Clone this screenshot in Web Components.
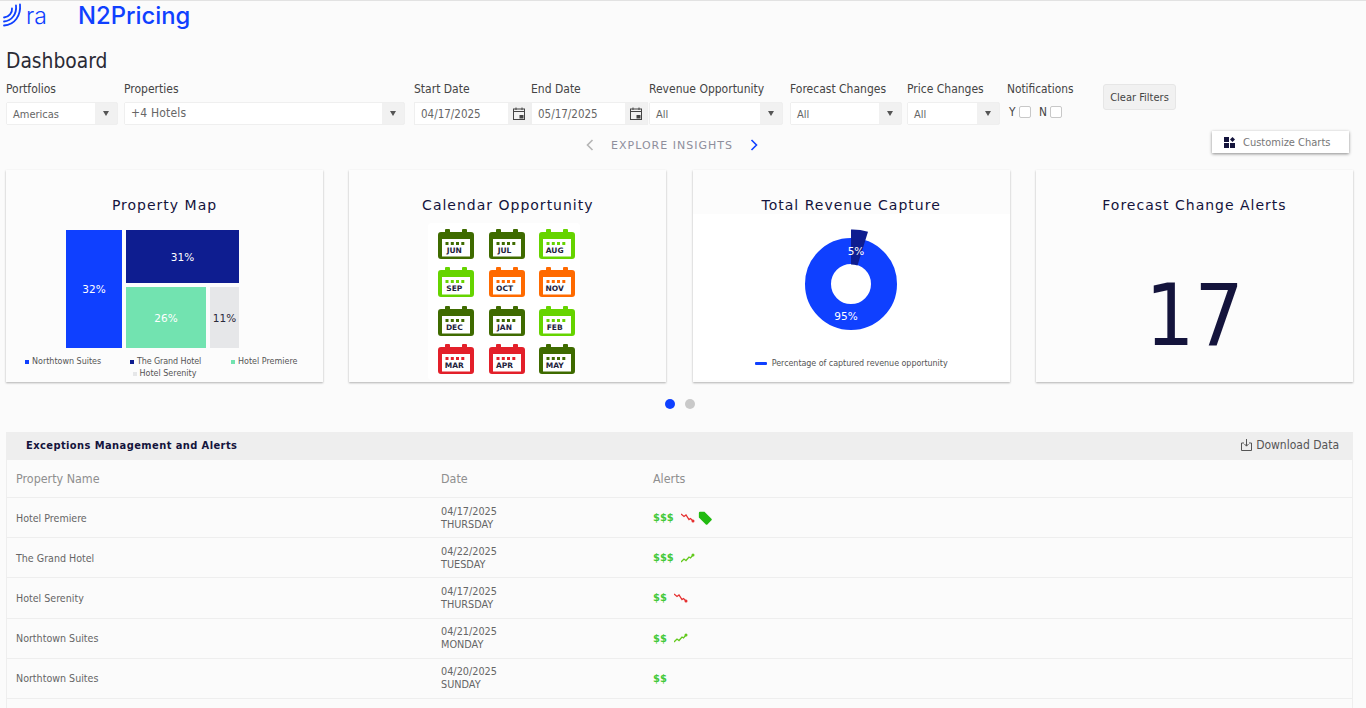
<!DOCTYPE html>
<html>
<head>
<meta charset="utf-8">
<title>N2Pricing Dashboard</title>
<style>
  html, body { margin: 0; height: 708px; overflow: hidden; background: #fbfbfb; }
  body { font-family: "DejaVu Sans Condensed", "DejaVu Sans", sans-serif; color: #444; border-top: 1px solid #e2e2e2; box-sizing: border-box; }
</style>
</head>
<body>
<app-header></app-header>
<filter-bar></filter-bar>
<insights-nav></insights-nav>
<card-row>
  <chart-card heading="Property Map"><property-treemap></property-treemap></chart-card>
  <chart-card heading="Calendar Opportunity"><calendar-grid></calendar-grid></chart-card>
  <chart-card heading="Total Revenue Capture"><revenue-donut></revenue-donut></chart-card>
  <chart-card heading="Forecast Change Alerts"><big-number value="17"></big-number></chart-card>
</card-row>
<carousel-dots></carousel-dots>
<exceptions-table>
  <alert-row name="Hotel Premiere" date="04/17/2025" day="THURSDAY" money="$$$" trend="down" tag></alert-row>
  <alert-row name="The Grand Hotel" date="04/22/2025" day="TUESDAY" money="$$$" trend="up"></alert-row>
  <alert-row name="Hotel Serenity" date="04/17/2025" day="THURSDAY" money="$$" trend="down"></alert-row>
  <alert-row name="Northtown Suites" date="04/21/2025" day="MONDAY" money="$$" trend="up"></alert-row>
  <alert-row name="Northtown Suites" date="04/20/2025" day="SUNDAY" money="$$"></alert-row>
</exceptions-table>

<script>
const FONT = '"DejaVu Sans Condensed", "DejaVu Sans", sans-serif';
const WIDE = '"DejaVu Sans", sans-serif';

function shadow(el, html) {
    el.attachShadow({ mode: 'open' }).innerHTML = html;
}

class AppHeader extends HTMLElement {
    connectedCallback() {
        shadow(this, `
        <style>
            :host { display: block; height: 41px; }
            .top { display: flex; align-items: baseline; color: #0f40ff; position: relative; padding-left: 26px; height: 30px; }
            svg { position: absolute; left: 0; top: 0; display: block; }
            .ra { font: 300 23px/30px Inter, sans-serif; width: 52px; flex: none; }
            .name { font: 500 23.800px/30px Inter, sans-serif; }
        </style>
        <div class="top">
            <svg width="24" height="28" viewBox="0 0 24 28" fill="none" stroke="#0f40ff" stroke-width="1.800" stroke-linecap="round">
                <path d="M20 3.500 C21 14 15 24 4 24.500"/>
                <path d="M16 4.500 C17 13 11.500 20 4 20.500"/>
                <path d="M12 7.500 C12.500 11.500 9 16 4 16.500"/>
            </svg>
            <span class="ra">ra</span>
            <span class="name">N2Pricing</span>
        </div>`);
    }
}

class FilterSelect extends HTMLElement {
    connectedCallback() {
        const w = this.getAttribute('width');
        shadow(this, `
        <style>
            :host { display: block; width: ${w}px; flex: none; font-size: 12px; color: #444; }
            label { display: block; height: 20px; line-height: 15px; white-space: nowrap; }
            .box { display: flex; height: 23px; background: #f1f1f1; border-radius: 2px; border: 1px solid #efefef; box-sizing: border-box; }
            .val { flex: 1; background: #fff; padding-left: 6px; line-height: 23px; height: 21px; color: #666; font-size: 11px; white-space: nowrap; }
            .val.big { font-size: 12px; letter-spacing: .2px; line-height: 21px; }
            .btn { width: 22px; display: flex; align-items: center; justify-content: center; }
            .btn i { width: 0; height: 0; border: 3.500px solid transparent; border-top: 5px solid #555; border-bottom: 0; }
        </style>
        <label>${this.getAttribute('label')}</label>
        <div class="box"><div class="val ${this.hasAttribute('big') ? 'big' : ''}">${this.getAttribute('value')}</div><div class="btn"><i></i></div></div>`);
    }
}

class DateField extends HTMLElement {
    connectedCallback() {
        shadow(this, `
        <style>
            :host { display: block; width: 117px; flex: none; font-size: 12px; color: #444; }
            label { display: block; height: 20px; line-height: 15px; }
            .box { display: flex; height: 23px; background: #f1f1f1; border: 1px solid #efefef; box-sizing: border-box; }
            .val { flex: 1; background: #fff; padding-left: 6px; line-height: 23px; height: 21px; color: #666; font-size: 11.500px; }
            .btn { width: 22px; display: flex; align-items: center; justify-content: center; }
        </style>
        <label>${this.getAttribute('label')}</label>
        <div class="box"><div class="val">${this.getAttribute('value')}</div>
        <div class="btn"><svg width="12" height="13" viewBox="0 0 12 13" fill="none" stroke="#444" stroke-width="1">
            <rect x=".5" y="2" width="11" height="10.500"/><path d="M.5 4.500h11M3 .5v2.500M9 .5v2.500"/><rect x="6.500" y="8" width="4" height="3.500" fill="#444" stroke="none"/>
        </svg></div></div>`);
    }
}

class FilterBar extends HTMLElement {
    connectedCallback() {
        shadow(this, `
        <style>
            :host { display: block; padding: 0 0 0 6px; }
            h1 { font: 400 20.800px/24px ${FONT}; color: #2a2a35; margin: 0; padding-top: 7px; box-sizing: border-box; height: 40px; }
            .row { display: flex; align-items: flex-start; height: 48px; }
            .gap6 { margin-left: 6px; }
            .gap9 { margin-left: 9px; }
            .notif { font-size: 11.800px; margin-left: 7px; width: 96px; flex: none; }
            .notif label { display: block; height: 15px; line-height: 15px; }
            .yn { display: flex; align-items: center; height: 15px; margin-top: 7px; }
            .yn b { font-weight: 400; margin-left: 2px; margin-right: 3.500px; }
            .yn i + b { margin-left: 8px; }
            .yn i { width: 12px; height: 12px; box-sizing: border-box; background: #fff; border: 1px solid #c8c8c8; border-radius: 2px; display: block; }
            button { width: 73px; height: 26px; margin-top: 2px; font: 11px ${FONT}; color: #444; background: #f1f1f1; border: 1px solid #e6e6e6; border-radius: 3px; padding: 0; }
        </style>
        <h1>Dashboard</h1>
        <div class="row">
            <filter-select width="112" label="Portfolios" value="Americas"></filter-select>
            <filter-select class="gap6" width="281" label="Properties" value="+4 Hotels" big></filter-select>
            <date-field class="gap9" label="Start Date" value="04/17/2025"></date-field>
            <date-field label="End Date" value="05/17/2025"></date-field>
            <filter-select width="134" style="margin-left:1px" label="Revenue Opportunity" value="All"></filter-select>
            <filter-select width="112" style="margin-left:7px" label="Forecast Changes" value="All"></filter-select>
            <filter-select width="93" style="margin-left:5px" label="Price Changes" value="All"></filter-select>
            <div class="notif"><label>Notifications</label>
                <div class="yn"><b>Y</b><i></i><b>N</b><i></i></div></div>
            <button>Clear Filters</button>
        </div>`);
    }
}

class InsightsNav extends HTMLElement {
    connectedCallback() {
        shadow(this, `
        <style>
            :host { display: block; position: relative; height: 40px; }
            .nav { display: flex; justify-content: center; align-items: center; gap: 17px; height: 30px; padding-right: 22px; font: 11px ${WIDE}; letter-spacing: 1px; color: #8e8e9c; }
            svg { display: block; }
            .cust { position: absolute; left: 1212px; top: 1px; width: 137px; height: 22px; background: #fff; box-shadow: 0 1px 3px rgba(0,0,0,.45);
                display: flex; align-items: center; gap: 8px; padding-left: 12px; box-sizing: border-box; font-size: 11px; color: #777; }
        </style>
        <div class="nav">
            <svg width="8" height="12" viewBox="0 0 8 12" fill="none" stroke="#b5b5b5" stroke-width="1.600"><path d="M6.500 1 1.500 6l5 5"/></svg>
            <span>EXPLORE INSIGHTS</span>
            <svg width="8" height="12" viewBox="0 0 8 12" fill="none" stroke="#0f40ff" stroke-width="1.600"><path d="M1.500 1l5 5-5 5"/></svg>
        </div>
        <div class="cust">
            <svg width="11" height="11" viewBox="0 0 11 11" fill="#14143c"><rect width="5" height="5"/><path d="M8.500 0 11 2.500 8.500 5 6 2.500z"/><rect y="6" width="5" height="5"/><rect x="6" y="6" width="5" height="5"/></svg>
            <span>Customize Charts</span>
        </div>`);
    }
}

class CardRow extends HTMLElement {
    connectedCallback() {
        shadow(this, `
        <style>
            :host { display: grid; grid-template-columns: repeat(4, 317px); column-gap: 26.340px; padding-left: 6px; height: 213px; }
        </style>
        <slot></slot>`);
    }
}

class ChartCard extends HTMLElement {
    connectedCallback() {
        shadow(this, `
        <style>
            :host { display: flex; flex-direction: column; background: #fcfcfc; box-shadow: 0 1px 2px rgba(0,0,0,.3); height: 212px; }
            h2 { font: 400 14px/17px ${WIDE}; letter-spacing: 1px; color: #14143c; text-align: center; margin: 0; padding-top: 27px; height: 44px; box-sizing: border-box; flex: none; }
            .body { flex: 1; min-height: 0; }
        </style>
        <h2>${this.getAttribute('heading')}</h2>
        <div class="body"><slot></slot></div>`);
    }
}

class PropertyTreemap extends HTMLElement {
    connectedCallback() {
        shadow(this, `
        <style>
            :host { display: block; padding-top: 16px; font: 10.500px ${WIDE}; color: #fff; }
            .map { display: flex; gap: 4px; width: 173px; height: 118px; margin-left: 60px; }
            .map div { display: flex; align-items: center; justify-content: center; }
            .a { width: 56px; background: #0f40ff; }
            .right { width: 113px; display: flex; flex-direction: column !important; gap: 4px; align-items: stretch !important; }
            .b { height: 53px; background: #0e1d90; }
            .low { flex: 1; display: flex; gap: 4px; align-items: stretch !important; }
            .c { width: 80px; background: #72e3b0; }
            .d { width: 29px; background: #e6e7e9; color: #2a2a3a; }
            .legend { display: flex; flex-wrap: wrap; justify-content: center; width: 317px; margin-top: 8px; font: 8px/12px ${WIDE}; color: #555; }
            .legend span { display: inline-flex; align-items: center; white-space: nowrap; }
            .legend i { width: 4px; height: 4px; margin-right: 3px; display: block; flex: none; }
            .l1 { width: 105px; }
            .l2 { width: 101px; letter-spacing: -.1px; }
            .l3 { width: 73px; }
        </style>
        <div class="map">
            <div class="a">32%</div>
            <div class="right">
                <div class="b">31%</div>
                <div class="low"><div class="c">26%</div><div class="d">11%</div></div>
            </div>
        </div>
        <div class="legend">
            <span class="l1"><i style="background:#0f40ff"></i>Northtown Suites</span>
            <span class="l2"><i style="background:#0e1d90"></i>The Grand Hotel</span>
            <span class="l3"><i style="background:#72e3b0"></i>Hotel Premiere</span>
            <span class="l4"><i style="background:#e6e7e9"></i>Hotel Serenity</span>
        </div>`);
    }
}

class CalendarMonth extends HTMLElement {
    connectedCallback() {
        const c = this.getAttribute('color');
        shadow(this, `
        <style>
            :host { display: block; position: relative; width: 36px; height: 30px; }
            svg { display: block; }
            span { position: absolute; left: 2px; width: 28px; top: 17px; text-align: center; font: 700 7.500px/10px ${WIDE}; color: #22223c; }
        </style>
        <svg width="36" height="30" viewBox="0 0 36 30">
            <path fill="${c}" d="M7 1a1 1 0 0 1 1-1h3a1 1 0 0 1 1 1v2h12V1a1 1 0 0 1 1-1h3a1 1 0 0 1 1 1v2h4a3 3 0 0 1 3 3v21a3 3 0 0 1-3 3H3a3 3 0 0 1-3-3V6a3 3 0 0 1 3-3h4z"/>
            <rect x="4" y="10" width="28" height="17.500" fill="#fff"/>
            <g fill="${c}"><rect x="7.500" y="13" width="3" height="3"/><rect x="12.800" y="13" width="3" height="3"/><rect x="18" y="13" width="3" height="3"/><rect x="23.300" y="13" width="3" height="3"/></g>
        </svg>
        <span>${this.getAttribute('month')}</span>`);
    }
}

class CalendarGrid extends HTMLElement {
    connectedCallback() {
        const G = '#3f6b00', L = '#66d400', O = '#ff6a00', R = '#e3202a';
        const months = [['JUN', G], ['JUL', G], ['AUG', L], ['SEP', L], ['OCT', O], ['NOV', O], ['DEC', G], ['JAN', G], ['FEB', L], ['MAR', R], ['APR', R], ['MAY', G]];
        shadow(this, `
        <style>
            :host { display: block; width: 152px; height: 157px; margin: 9px 0 0 79px; background: #fff; border-radius: 4px; box-sizing: border-box; padding: 6px 0 0 10px; }
            .grid { display: grid; grid-template-columns: repeat(3, 36px); column-gap: 14.200px; row-gap: 8.300px; }
        </style>
        <div class="grid">${months.map(m => `<calendar-month month="${m[0]}" color="${m[1]}"></calendar-month>`).join('')}</div>`);
    }
}

class RevenueDonut extends HTMLElement {
    connectedCallback() {
        shadow(this, `
        <style>
            :host { display: block; background: #fff; height: 166px; }
            .chart { height: 124px; }
            svg { display: block; }
            .legend { display: flex; justify-content: center; align-items: center; gap: 5px; font: 8px ${WIDE}; color: #555; height: 50px; letter-spacing: -.05px; }
            .legend i { width: 12px; height: 3px; background: #0f40ff; border-radius: 1px; display: block; }
            svg text { font: 10.500px ${WIDE}; fill: #fff; }
        </style>
        <div class="chart">
            <svg width="316" height="124" viewBox="0 0 316 124">
                <circle cx="158" cy="70" r="33" fill="none" stroke="#0f40ff" stroke-width="26"/>
                <path fill="#0e1d90" d="M158 50.500 L158 15.500 A55 55 0 0 1 175 17.700 L164.500 51.400 A20 20 0 0 0 158 50.500z"/>
                <text x="163" y="41" text-anchor="middle">5%</text>
                <text x="153" y="106" text-anchor="middle">95%</text>
            </svg>
        </div>
        <div class="legend"><i></i><span>Percentage of captured revenue opportunity</span></div>`);
    }
}

class BigNumber extends HTMLElement {
    connectedCallback() {
        shadow(this, `
        <style>
            :host { display: flex; justify-content: center; padding-top: 50px; }
            span { font: 400 86px/1.2 ${FONT}; color: #14143c; }
        </style>
        <span>${this.getAttribute('value')}</span>`);
    }
}

class CarouselDots extends HTMLElement {
    connectedCallback() {
        shadow(this, `
        <style>
            :host { display: flex; justify-content: center; gap: 10px; height: 49px; padding: 16px 0 0 0; box-sizing: border-box; width: 1360px; }
            i { width: 10px; height: 10px; border-radius: 50%; background: #c9c9c9; display: block; }
            i:first-of-type { background: #0f40ff; }
        </style>
        <i></i><i></i>`);
    }
}

class ExceptionsTable extends HTMLElement {
    connectedCallback() {
        shadow(this, `
        <style>
            :host { display: block; margin-left: 6px; width: 1347px; height: 300px; border-left: 1px solid #eee; border-right: 1px solid #eee; box-sizing: border-box; }
            .bar { display: flex; justify-content: space-between; align-items: center; height: 28px; box-sizing: border-box; background: #eee; padding: 0 14px 2px 20px; font-size: 11px; margin: 0 -1px; }
            .bar b { color: #14143c; letter-spacing: .42px; }
            .dl { display: flex; align-items: center; gap: 4px; font-size: 12px; color: #555; }
            svg { display: block; }
            .cols { display: grid; grid-template-columns: 425px 212px 1fr; height: 38px; align-items: center; padding-left: 9px; font-size: 12.400px; color: #8f8f8f; border-bottom: 1px solid #eee; box-sizing: border-box; }
        </style>
        <div class="bar"><b>Exceptions Management and Alerts</b>
            <span class="dl"><svg width="11" height="12" viewBox="0 0 11 12" fill="none" stroke="#555"><path d="M3 4H.5v7.500h10V4H8M5.500 0v7M3.500 5l2 2.200L7.500 5"/></svg>Download Data</span></div>
        <div class="cols"><span>Property Name</span><span>Date</span><span>Alerts</span></div>
        <slot></slot>`);
    }
}

class AlertRow extends HTMLElement {
    connectedCallback() {
        const t = this.getAttribute('trend');
        const down = '<svg class="dn" width="14" height="10" viewBox="0 0 14 10" fill="none" stroke="#e53030" stroke-width="1.300"><path d="M0 1 3 3.500 5 2 8 6.500 9.500 5.500 12 8"/><circle cx="12" cy="8" r="1.500" fill="#e53030" stroke="none"/></svg>';
        const up = '<svg width="14" height="10" viewBox="0 0 14 10" fill="none" stroke="#62c91c" stroke-width="1.300"><path d="M0 9 3 6 5 7.500 8 4 9.500 5 12 2"/><circle cx="12" cy="2" r="1.500" fill="#62c91c" stroke="none"/></svg>';
        const tag = '<svg class="tag" width="14" height="14" viewBox="0 0 13 13"><path fill="#22bb11" d="M.8 1.800A1 1 0 0 1 1.800.8H6l6.500 6.500a1 1 0 0 1 0 1.400l-3.800 3.800a1 1 0 0 1-1.400 0L.8 6z"/></svg>';
        shadow(this, `
        <style>
            :host { display: grid; grid-template-columns: 425px 212px 1fr; height: 40.200px; align-items: center; padding-left: 9px; font-size: 10.600px; color: #666; border-bottom: 1px solid #eee; box-sizing: border-box; }
            .d { line-height: 13px; font-size: 10.800px; }
            .a { display: flex; align-items: center; gap: 7px; }
            .m { color: #43c93a; font-weight: 700; font-size: 11px; }
            svg { display: block; }
            .dn { margin-top: 1px; }
            .tag { margin-left: -4px; }
        </style>
        <span>${this.getAttribute('name')}</span>
        <span class="d">${this.getAttribute('date')}<br>${this.getAttribute('day')}</span>
        <span class="a"><span class="m">${this.getAttribute('money')}</span>${t === 'down' ? down : t === 'up' ? up : ''}${this.hasAttribute('tag') ? tag : ''}</span>`);
    }
}

customElements.define('app-header', AppHeader);
customElements.define('filter-select', FilterSelect);
customElements.define('date-field', DateField);
customElements.define('filter-bar', FilterBar);
customElements.define('insights-nav', InsightsNav);
customElements.define('card-row', CardRow);
customElements.define('chart-card', ChartCard);
customElements.define('property-treemap', PropertyTreemap);
customElements.define('calendar-month', CalendarMonth);
customElements.define('calendar-grid', CalendarGrid);
customElements.define('revenue-donut', RevenueDonut);
customElements.define('big-number', BigNumber);
customElements.define('carousel-dots', CarouselDots);
customElements.define('exceptions-table', ExceptionsTable);
customElements.define('alert-row', AlertRow);
</script>
</body>
</html>
